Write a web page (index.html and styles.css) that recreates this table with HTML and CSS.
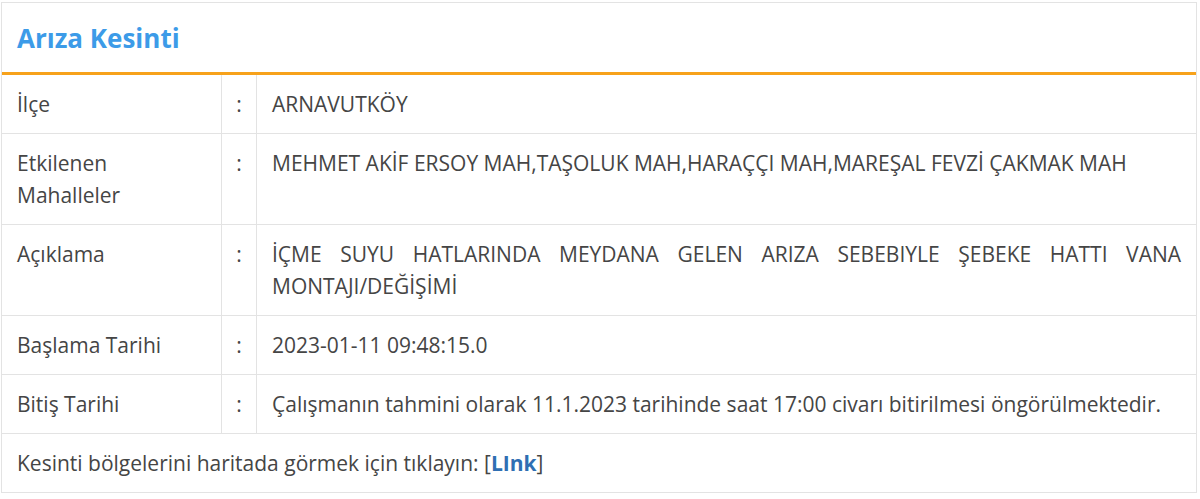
FILE: index.html
```html
<!DOCTYPE html>
<html lang="tr">
<head>
<meta charset="utf-8">
<title>Arıza Kesinti</title>
<link rel="stylesheet" href="styles.css">
</head>
<body>
<div class="panel">
  <div class="panel-header"><h2 class="panel-title">Arıza Kesinti</h2></div>
  <table class="info">
    <tr><td class="label">İlçe</td><td class="sep">:</td><td class="value">ARNAVUTKÖY</td></tr>
    <tr><td class="label">Etkilenen Mahalleler</td><td class="sep">:</td><td class="value">MEHMET AKİF ERSOY MAH,TAŞOLUK MAH,HARAÇÇI MAH,MAREŞAL FEVZİ ÇAKMAK MAH</td></tr>
    <tr><td class="label">Açıklama</td><td class="sep">:</td><td class="value justify">İÇME SUYU HATLARINDA MEYDANA GELEN ARIZA SEBEBIYLE ŞEBEKE HATTI VANA MONTAJI/DEĞİŞİMİ</td></tr>
    <tr><td class="label">Başlama Tarihi</td><td class="sep">:</td><td class="value">2023-01-11 09:48:15.0</td></tr>
    <tr><td class="label">Bitiş Tarihi</td><td class="sep">:</td><td class="value">Çalışmanın tahmini olarak 11.1.2023 tarihinde saat 17:00 civarı bitirilmesi öngörülmektedir.</td></tr>
    <tr><td class="footer" colspan="3">Kesinti bölgelerini haritada görmek için tıklayın: [<a class="link" href="#">LInk</a>]</td></tr>
  </table>
</div>
</body>
</html>
```
FILE: styles.css
```css
html, body {
  margin: 0;
  padding: 0;
  background: #ffffff;
}
body {
  font-family: "Open Sans", "Noto Sans", sans-serif;
  color: #454545;
}
.panel {
  margin: 2px 3px 0 1px;
  border: 1px solid #e3e3e3;
  border-bottom: none;
}
.panel-header {
  height: 69px;
  display: flex;
  align-items: center;
  padding-left: 15px;
  border-bottom: 3px solid #f7a21b;
}
.panel-title {
  margin: 0;
  font-size: 26px;
  font-weight: 700;
  color: #3c9be8;
}
.info {
  width: 100%;
  border-collapse: collapse;
  font-size: 21px;
  line-height: 32px;
}
.info td {
  border-bottom: 1px solid #e3e3e3;
  padding: 13px 15px;
  vertical-align: top;
}
.info .label {
  width: 189px;
  border-right: 1px solid #e3e3e3;
}
.info .sep {
  width: 34px;
  padding: 13px 0;
  text-align: center;
  border-right: 1px solid #e3e3e3;
}
.info .value.justify {
  text-align: justify;
}
.info .footer {
  padding: 13px 15px;
}
.link {
  color: #2f6fb3;
  font-weight: 700;
  text-decoration: none;
}
```
